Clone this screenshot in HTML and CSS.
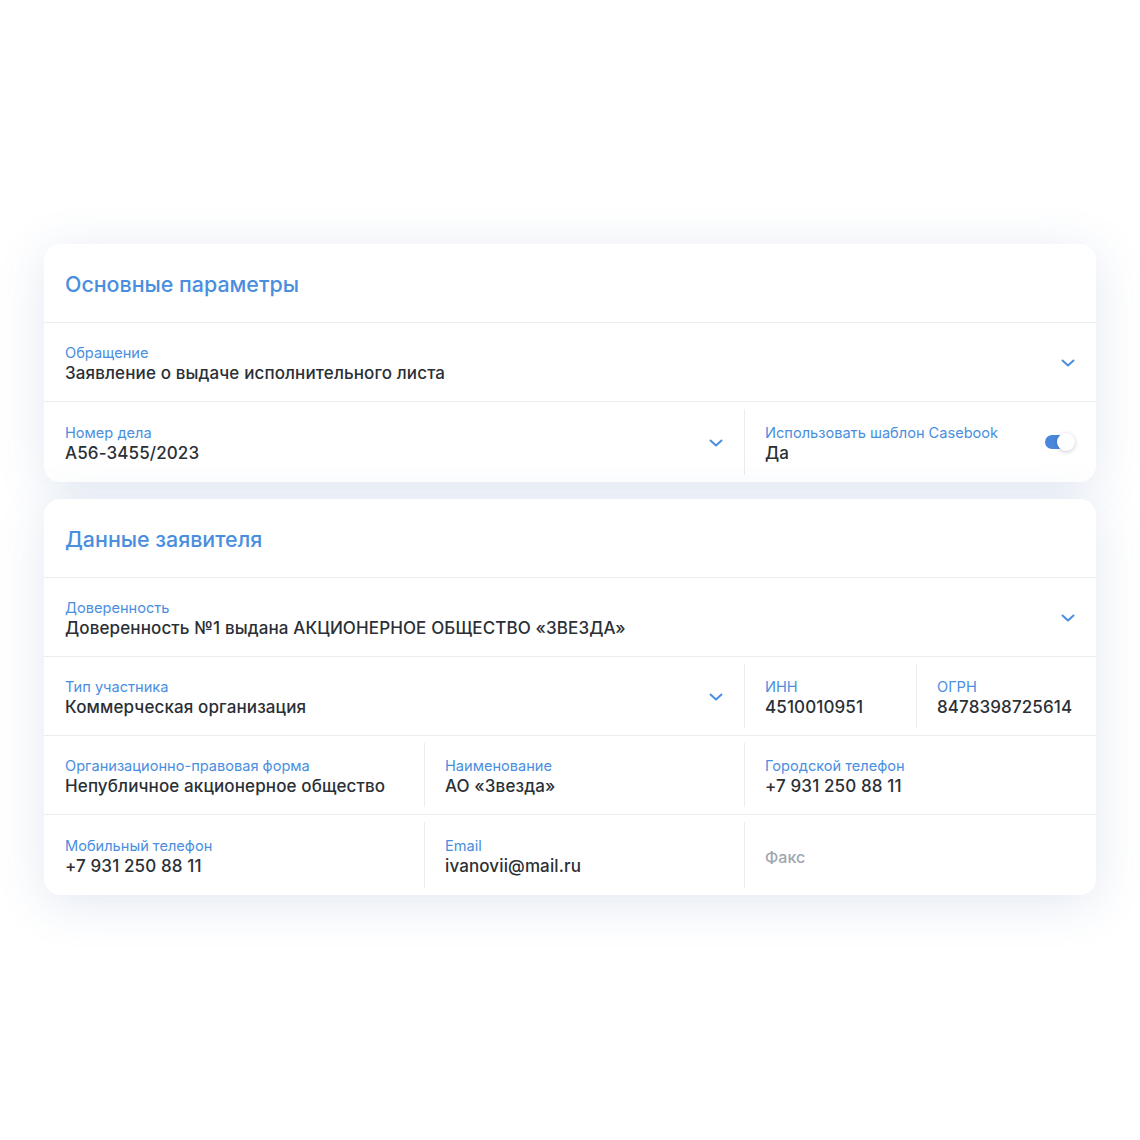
FILE: index.html
```html
<!DOCTYPE html>
<html lang="ru">
<head>
    <meta charset="UTF-8">
    <meta name="viewport" content="width=device-width, initial-scale=1.0">
    <title>Заявление</title>
    <link rel="stylesheet" href="styles.css">
</head>
<body>
    <div class="page">
        <!-- Основные параметры -->
        <section class="card">
            <h2 class="card-title">Основные параметры</h2>
            <div class="row">
                <div class="cell w-full">
                    <div class="field">
                        <div class="label">Обращение</div>
                        <div class="value">Заявление о выдаче исполнительного листа</div>
                    </div>
                    <svg class="chevron" viewBox="0 0 14 8"><path d="M1.5 1.5 7 6.5l5.5-5"/></svg>
                </div>
            </div>
            <div class="row last">
                <div class="cell w-700">
                    <div class="field">
                        <div class="label">Номер дела</div>
                        <div class="value">А56-3455/2023</div>
                    </div>
                    <svg class="chevron" viewBox="0 0 14 8"><path d="M1.5 1.5 7 6.5l5.5-5"/></svg>
                </div>
                <div class="cell w-352">
                    <div class="field">
                        <div class="label">Использовать шаблон Casebook</div>
                        <div class="value">Да</div>
                    </div>
                    <span class="toggle"><span class="knob"></span></span>
                </div>
            </div>
        </section>

        <!-- Данные заявителя -->
        <section class="card">
            <h2 class="card-title">Данные заявителя</h2>
            <div class="row">
                <div class="cell w-full">
                    <div class="field">
                        <div class="label">Доверенность</div>
                        <div class="value">Доверенность №1 выдана АКЦИОНЕРНОЕ ОБЩЕСТВО «ЗВЕЗДА»</div>
                    </div>
                    <svg class="chevron" viewBox="0 0 14 8"><path d="M1.5 1.5 7 6.5l5.5-5"/></svg>
                </div>
            </div>
            <div class="row">
                <div class="cell w-700">
                    <div class="field">
                        <div class="label">Тип участника</div>
                        <div class="value">Коммерческая организация</div>
                    </div>
                    <svg class="chevron" viewBox="0 0 14 8"><path d="M1.5 1.5 7 6.5l5.5-5"/></svg>
                </div>
                <div class="cell w-172">
                    <div class="field">
                        <div class="label">ИНН</div>
                        <div class="value">4510010951</div>
                    </div>
                </div>
                <div class="cell w-180">
                    <div class="field">
                        <div class="label">ОГРН</div>
                        <div class="value">8478398725614</div>
                    </div>
                </div>
            </div>
            <div class="row">
                <div class="cell w-380">
                    <div class="field">
                        <div class="label">Организационно-правовая форма</div>
                        <div class="value">Непубличное акционерное общество</div>
                    </div>
                </div>
                <div class="cell w-320">
                    <div class="field">
                        <div class="label">Наименование</div>
                        <div class="value">АО «Звезда»</div>
                    </div>
                </div>
                <div class="cell w-352">
                    <div class="field">
                        <div class="label">Городской телефон</div>
                        <div class="value">+7 931 250 88 11</div>
                    </div>
                </div>
            </div>
            <div class="row last">
                <div class="cell w-380">
                    <div class="field">
                        <div class="label">Мобильный телефон</div>
                        <div class="value">+7 931 250 88 11</div>
                    </div>
                </div>
                <div class="cell w-320">
                    <div class="field">
                        <div class="label">Email</div>
                        <div class="value">ivanovii@mail.ru</div>
                    </div>
                </div>
                <div class="cell w-352">
                    <div class="placeholder">Факс</div>
                </div>
            </div>
        </section>
    </div>
</body>
</html>
```

FILE: styles.css
```css
body {
    margin: 0;
    padding: 0;
    background: #ffffff;
    font-family: Inter, "Noto Sans", sans-serif;
    color: #2a2e35;
}

.page {
    width: 1052px;
    margin-left: 44px;
    padding-top: 244px;
    padding-bottom: 245px;
    display: flex;
    flex-direction: column;
    gap: 17px;
}

.card {
    background: #fff;
    border-radius: 16px;
    box-shadow: 0 8px 48px rgba(60, 100, 170, 0.15);
    overflow: hidden;
}

.card-title {
    margin: 0;
    height: 79px;
    padding-left: 21px;
    padding-top: 2px;
    display: flex;
    align-items: center;
    font-size: 21.4px;
    font-weight: 500;
    color: #4a8ee0;
    border-bottom: 1px solid #e9ecf0;
    box-sizing: border-box;
}

.row {
    display: flex;
    height: 79px;
    padding: 7px 0;
    box-sizing: border-box;
    border-bottom: 1px solid #e9ecf0;
}
.row.last {
    border-bottom: none;
    height: 80px;
}

.cell {
    display: flex;
    align-items: center;
    justify-content: space-between;
    padding: 0 21px 0 20px;
    box-sizing: border-box;
    border-left: 1px solid #e9ecf0;
}
.cell:first-child {
    border-left: none;
    padding-left: 21px;
}

.w-full { width: 100%; }
.w-700 { width: 700px; }
.w-380 { width: 380px; }
.w-320 { width: 320px; }
.w-352 { width: 352px; }
.w-172 { width: 172px; }
.w-180 { width: 180px; }

.field {
    padding-top: 3px;
}
.label {
    font-size: 14.6px;
    line-height: 20px;
    color: #4a8ee0;
}
.value {
    font-size: 17px;
    font-weight: 500;
    letter-spacing: 0.12px;
    line-height: 21px;
    color: #2b2f36;
    white-space: nowrap;
}
.placeholder {
    font-size: 16px;
    font-weight: 500;
    color: #9ea6b0;
    padding-top: 4px;
}

.chevron {
    width: 14px;
    height: 8px;
    fill: none;
    stroke: #4a8ee0;
    stroke-width: 2;
    stroke-linecap: round;
    stroke-linejoin: round;
    flex-shrink: 0;
    margin-top: 2px;
}

.toggle {
    position: relative;
    width: 26px;
    height: 14px;
    border-radius: 7px;
    background: #4a86db;
    margin-right: 4px;
    flex-shrink: 0;
}
.knob {
    position: absolute;
    right: -4px;
    top: -2px;
    width: 18px;
    height: 18px;
    border-radius: 50%;
    background: #fff;
    box-shadow: 0 1px 4px rgba(30, 50, 90, 0.25);
}
```
